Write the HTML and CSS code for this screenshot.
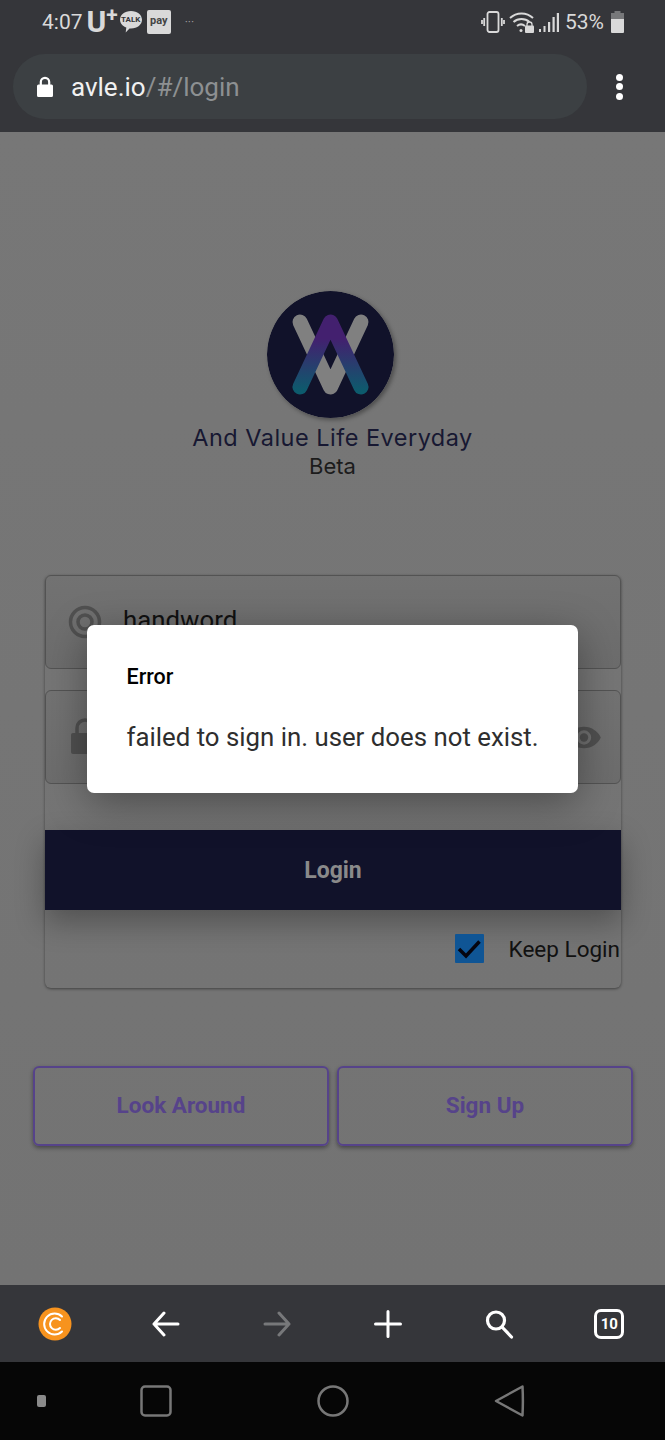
FILE: index.html
```html
<!DOCTYPE html>
<html lang="en">
<head>
  <meta charset="UTF-8" />
  <title>Login</title>
  <link rel="stylesheet" href="styles.css">
</head>
<body>
  <div class="screen">
    <header class="chrome">
      <div class="status">
        <span class="time">4:07</span>
        <span class="carrier">U<sup>+</sup></span>
        <span class="talk">
          <svg width="26" height="26" viewBox="0 0 26 26"><path fill="#d9d9d9" d="M13 2c6.400 0 11 3.900 11 8.700 0 4.800-4.600 8.700-11 8.700h-1.500l-3.800 4.200.6-5C4.800 17.200 2 14.300 2 10.700 2 5.900 6.600 2 13 2z"/></svg>
          <b class="talk-text">TALK</b>
        </span>
        <span class="pay">pay</span>
        <span class="more">···</span>
        <span class="status-right">
          <svg class="vibrate" width="24" height="24" viewBox="0 0 24 24" fill="none" stroke="#d9d9d9" stroke-width="1.800"><rect x="6.500" y="2" width="11" height="20" rx="2"/><path d="M3.200 8v8M1 10v4M20.800 8v8M23 10v4"/></svg>
          <svg class="wifi" width="26" height="24" viewBox="0 0 26 24" fill="none" stroke="#d9d9d9" stroke-width="2"><path d="M1 8c6.500-6 16.500-6 23 0M4.500 12c4.500-4 11.500-4 16 0M8 16c2.500-2 5.500-2 8 0"/><circle cx="12" cy="20.500" r="1.500" fill="#d9d9d9" stroke="none"/><rect x="16" y="15.500" width="9" height="7.500" rx="1" fill="#d9d9d9" stroke="none"/><path d="M18 16v-1.500a2.500 2.500 0 0 1 5 0V16" stroke-width="1.300"/></svg>
          <svg class="signal" width="20" height="24" viewBox="0 0 20 24" fill="#d9d9d9"><path d="M0 19h2v3H0zM4.500 16h2v6h-2zM9 12h2.200v10H9zM13.500 7h2.200v15h-2.200zM17.800 3H20v19h-2.200z"/></svg>
          <span class="battery-text">53%</span>
          <svg class="battery" width="13" height="22" viewBox="0 0 13 22"><path fill="#77787a" d="M3.500 0h6v2H13v8H0V2h3.500z"/><path fill="#d9d9d9" d="M0 8h13v13a1 1 0 0 1-1 1H1a1 1 0 0 1-1-1z"/></svg>
        </span>
      </div>
      <div class="toolbar">
        <div class="url-pill">
          <svg width="18" height="24" viewBox="0 0 18 24"><path fill="#fff" d="M2.500 9.500h13a1.500 1.500 0 0 1 1.500 1.500v9.500a1.500 1.500 0 0 1-1.500 1.500h-13A1.500 1.500 0 0 1 1 20.500V11a1.500 1.500 0 0 1 1.500-1.500z"/><path fill="none" stroke="#fff" stroke-width="2.200" d="M4.800 10V7a4.200 4.200 0 0 1 8.400 0v3"/></svg>
          <span class="url">avle.io<span class="url-path">/#/login</span></span>
        </div>
        <div class="menu-dots"><i></i><i></i><i></i></div>
      </div>
    </header>

    <main class="page">
      <div class="brand">
        <svg class="logo" width="127" height="127" viewBox="0 0 127 127">
          <defs>
            <linearGradient id="logoGrad" gradientUnits="userSpaceOnUse" x1="0" y1="30" x2="0" y2="100">
              <stop offset="0.25" stop-color="#43206f" />
              <stop offset="1" stop-color="#0d5b6d" />
            </linearGradient>
          </defs>
          <circle cx="63.500" cy="63.500" r="63.500" fill="#11122a" />
          <path d="M33 31 L63.500 96 L94 31" fill="none" stroke="#808080" stroke-width="15" stroke-linecap="round" stroke-linejoin="round" />
          <path d="M33 96 L63.500 31 L94 96" fill="none" stroke="url(#logoGrad)" stroke-width="15" stroke-linecap="round" stroke-linejoin="round" />
        </svg>
        <div class="tagline">And Value Life Everyday</div>
        <div class="beta">Beta</div>
      </div>

      <form class="card">
        <div class="field">
          <svg width="34" height="34" viewBox="0 0 34 34" fill="none" stroke="#505050"><circle cx="17" cy="17" r="14.500" stroke-width="3.500"/><circle cx="17" cy="17" r="7" stroke-width="3.500"/></svg>
          <span class="field-value">handword</span>
        </div>
        <div class="field">
          <svg width="34" height="38" viewBox="0 0 34 38"><path fill="#505050" d="M5 15h24a2 2 0 0 1 2 2v17a2 2 0 0 1-2 2H5a2 2 0 0 1-2-2V17a2 2 0 0 1 2-2z"/><path fill="none" stroke="#505050" stroke-width="3.500" d="M9 15V10a8 8 0 0 1 16 0v5"/></svg>
          <svg class="eye" width="36" height="29" viewBox="0 0 30 24"><path fill="#505050" d="M15 3C8.500 3 3.200 7 1 12c2.200 5 7.500 9 14 9s11.800-4 14-9c-2.200-5-7.500-9-14-9zm0 15a6 6 0 1 1 0-12 6 6 0 0 1 0 12z"/><circle cx="15" cy="12" r="3.500" fill="#505050"/></svg>
        </div>
        <button type="button" class="login-btn">Login</button>
        <label class="keep">
          <span class="check">
            <svg width="29" height="29" viewBox="0 0 29 29"><path fill="none" stroke="#050510" stroke-width="3.500" d="M4 15l7 7L24.500 7.500"/></svg>
          </span>
          <span>Keep Login</span>
        </label>
      </form>

      <div class="actions">
        <button type="button" class="outline-btn">Look Around</button>
        <button type="button" class="outline-btn">Sign Up</button>
      </div>
    </main>

    <div class="bottom-bar">
      <span class="coin">
        <svg width="34" height="34" viewBox="0 0 34 34" fill="none" stroke="#fff" stroke-linecap="round"><circle cx="17" cy="17" r="16.500" fill="#f7931e" stroke="none"/><path stroke-width="2" d="M24 9.500A10.500 10.500 0 1 0 24 24.500"/><path stroke-width="2" d="M22 13a5.800 5.800 0 1 0 0 8"/></svg>
      </span>
      <svg width="28" height="28" viewBox="0 0 28 28" fill="none" stroke="#fff" stroke-width="3" stroke-linecap="round" stroke-linejoin="round"><path d="M26 14H2M12 3L2 14l10 11"/></svg>
      <svg width="28" height="28" viewBox="0 0 28 28" fill="none" stroke="#77787a" stroke-width="3" stroke-linecap="round" stroke-linejoin="round"><path d="M2 14h24M16 3l10 11-10 11"/></svg>
      <svg width="28" height="28" viewBox="0 0 28 28" fill="none" stroke="#fff" stroke-width="3" stroke-linecap="round"><path d="M1.500 14h25M14 1.500v25"/></svg>
      <svg width="30" height="30" viewBox="0 0 30 30" fill="none" stroke="#fff" stroke-width="3.200" stroke-linecap="round"><circle cx="12" cy="11.500" r="8.500"/><path d="M18 18l9.500 10"/></svg>
      <span class="tabs">10</span>
    </div>

    <nav class="nav-bar">
      <span class="nav-dot"></span>
      <svg width="32" height="32" viewBox="0 0 32 32" fill="none" stroke="#777" stroke-width="2.500"><rect x="1.500" y="1.500" width="29" height="29" rx="3.500"/></svg>
      <svg width="32" height="32" viewBox="0 0 32 32" fill="none" stroke="#777" stroke-width="2.500"><circle cx="16" cy="16" r="14.500"/></svg>
      <svg width="32" height="34" viewBox="0 0 32 34" fill="none" stroke="#777" stroke-width="2.500" stroke-linejoin="round"><path d="M28.500 2.500L2 17l26.500 14.500c.5-9.500.5-19.500 0-29z"/></svg>
    </nav>

    <div class="dialog">
      <div class="dialog-title">Error</div>
      <div class="dialog-msg">failed to sign in. user does not exist.</div>
    </div>
  </div>
</body>
</html>
```

FILE: styles.css
```css
body {
  margin: 0;
  font-family: Roboto, sans-serif;
  background: #757575;
}

.screen {
  position: relative;
  width: 665px;
  height: 1440px;
  display: flex;
  flex-direction: column;
  overflow: hidden;
}

.chrome {
  background-color: #35363a;
  height: 132px;
  flex: none;
}

.status {
  display: flex;
  align-items: center;
  height: 44px;
  padding: 0 41px 2px 42px;
  color: #d9d9d9;
  font-size: 21px;
}

.time {
  margin-right: 4px;
}

.carrier {
  font-size: 30px;
  font-weight: 700;
  line-height: 1;
}

.carrier sup {
  font-size: 21px;
  line-height: 0;
  vertical-align: 10px;
}

.talk {
  position: relative;
  display: flex;
  margin-right: 1px;
}

.talk-text {
  position: absolute;
  left: 2px;
  top: 6px;
  width: 22px;
  text-align: center;
  font-size: 8px;
  color: #35363a;
}

.pay {
  width: 24px;
  height: 24px;
  margin-left: 2px;
  background-color: #d9d9d9;
  border-radius: 2px;
  color: #444;
  font-size: 11px;
  font-weight: 700;
  line-height: 22px;
  text-align: center;
}

.more {
  margin-left: 14px;
  font-size: 12px;
  color: #999;
}

.status-right {
  margin-left: auto;
  display: flex;
  align-items: center;
  gap: 6px;
}

.vibrate {
  margin-right: -2px;
}

.wifi {
  margin-right: -2px;
}

.battery {
  margin-left: 1px;
}

.toolbar {
  display: flex;
  align-items: center;
  margin-top: 8px;
}

.url-pill {
  display: flex;
  align-items: center;
  gap: 17px;
  width: 574px;
  height: 65px;
  margin-left: 13px;
  padding-left: 23px;
  box-sizing: border-box;
  border-radius: 33px;
  background-color: #3c4043;
}

.url {
  color: #f1f1f1;
  font-size: 26px;
}

.url-path {
  color: #8d9092;
}

.menu-dots {
  display: flex;
  flex-direction: column;
  gap: 2.500px;
  margin-left: 29px;
}

.menu-dots i {
  width: 7px;
  height: 7px;
  border-radius: 50%;
  background-color: #fff;
}

.page {
  flex: 1;
  padding-top: 159px;
  background: linear-gradient(#777777, #737373);
}

.brand {
  display: flex;
  flex-direction: column;
  align-items: center;
}

.logo {
  margin-right: 4px;
  border-radius: 50%;
  box-shadow: 2px 2px 4px rgba(0, 0, 0, 0.35);
}

.tagline {
  margin-top: 6px;
  color: #171832;
  font-family: Inter, sans-serif;
  font-size: 23.500px;
  line-height: 28px;
  letter-spacing: 0.480px;
}

.beta {
  color: #1c1c1c;
  font-family: Inter, sans-serif;
  font-size: 22px;
  line-height: 29px;
}

.card {
  width: 576px;
  height: 413px;
  box-sizing: border-box;
  margin: 94px 0 0 45px;
  border-radius: 6px;
  box-shadow: 0 1px 3px rgba(0, 0, 0, 0.45);
}

.field {
  display: flex;
  align-items: center;
  gap: 21px;
  height: 94px;
  box-sizing: border-box;
  margin-bottom: 21px;
  padding: 0 18px 0 22px;
  border: 1px solid #535353;
  border-radius: 6px;
  background: linear-gradient(#727272, #6c6c6c);
}

.field-value {
  margin-top: -4px;
  color: #111;
  font-size: 25.800px;
}

.eye {
  margin-left: auto;
}

.login-btn {
  display: block;
  width: 100%;
  height: 80px;
  margin-top: 46px;
  border: none;
  background-color: #11122a;
  color: #8a8a8a;
  font-family: Roboto, sans-serif;
  font-size: 23px;
  font-weight: 700;
  box-shadow: 0 12px 30px rgba(0, 0, 0, 0.3);
}

.keep {
  display: flex;
  align-items: center;
  justify-content: flex-end;
  gap: 25px;
  margin-top: 24px;
  padding-right: 1px;
  color: #111;
  font-size: 22.500px;
}

.check {
  display: flex;
  width: 29px;
  height: 29px;
  border-radius: 1px;
  background-color: #0f5595;
}

.actions {
  display: flex;
  gap: 8px;
  margin: 78px 32px 0 33px;
}

.outline-btn {
  flex: 1;
  height: 80px;
  padding-bottom: 3px;
  border: 2px solid #56438a;
  border-radius: 6px;
  background: transparent;
  color: #56438a;
  font-family: Roboto, sans-serif;
  font-size: 22.500px;
  font-weight: 700;
  box-shadow: 0 2px 4px rgba(0, 0, 0, 0.4);
}

.bottom-bar {
  flex: none;
  display: grid;
  grid-template-columns: repeat(6, 110.800px);
  place-items: center;
  height: 77px;
  background-color: #35363a;
}

.coin {
  display: flex;
}

.tabs {
  width: 24px;
  height: 24px;
  border: 3.500px solid #fff;
  border-radius: 7px;
  color: #fff;
  font-size: 15px;
  font-weight: 700;
  line-height: 24px;
  text-align: center;
}

.nav-bar {
  flex: none;
  display: grid;
  grid-template-columns: 82px 148px 206px 148px;
  place-items: center;
  height: 78px;
  background-color: #060606;
}

.nav-dot {
  width: 9px;
  height: 12px;
  border-radius: 2px;
  background-color: #8a8a8a;
}

.dialog {
  position: absolute;
  left: 87px;
  top: 625px;
  width: 491px;
  height: 168px;
  box-sizing: border-box;
  padding: 39px 20px 0 39.500px;
  border-radius: 7px;
  background-color: #fff;
  box-shadow: 0 10px 40px rgba(0, 0, 0, 0.35);
}

.dialog-title {
  color: #000;
  font-size: 21.500px;
  font-weight: 500;
  line-height: 26px;
}

.dialog-msg {
  margin-top: 32px;
  color: #2e2e2e;
  font-size: 25.800px;
  line-height: 30px;
}
```
